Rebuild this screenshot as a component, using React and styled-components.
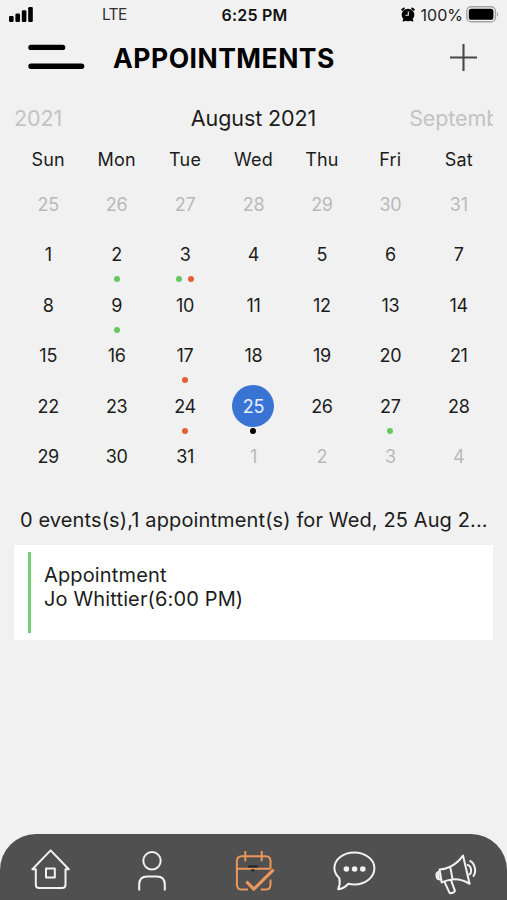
import React, { useState } from 'react'
import styled, { createGlobalStyle } from 'styled-components'

const weekDays = ['Sun', 'Mon', 'Tue', 'Wed', 'Thu', 'Fri', 'Sat']

const GREEN = '#67c763'
const RED = '#e65f33'

const marks = {
  2: [GREEN],
  3: [GREEN, RED],
  9: [GREEN],
  17: [RED],
  24: [RED],
  25: ['#000'],
  27: [GREEN],
}

// six weeks, starting on Sunday 25 July
const days = Array.from({ length: 42 }, (_, i) => {
  if (i < 7) return { day: 25 + i, muted: true }
  if (i < 38) return { day: i - 6, muted: false }
  return { day: i - 37, muted: true }
})

const SignalIcon = () => (
  <svg width="24" height="15" viewBox="0 0 24 15">
    <rect x="0" y="9" width="4.6" height="6" rx="1.2" />
    <rect x="6.4" y="6.5" width="4.6" height="8.5" rx="1.2" />
    <rect x="12.8" y="3.2" width="4.6" height="11.8" rx="1.2" />
    <rect x="19.2" y="0" width="4.6" height="15" rx="1.2" />
  </svg>
)

const AlarmIcon = () => (
  <svg width="14" height="15" viewBox="0 0 14 15">
    <circle cx="7" cy="8" r="6.3" />
    <path d="M1.3 2.8 2.8 1.5M12.7 2.8 11.2 1.5M2.6 13.6l1-1M11.4 13.6l-1-1" stroke="#000" strokeWidth="2" strokeLinecap="round" />
    <path d="M7.3 4.6V8.3H4.5" fill="none" stroke="#f2f2f2" strokeWidth="1.1" />
  </svg>
)

const BatteryIcon = () => (
  <svg width="34" height="17" viewBox="0 0 34 17">
    <rect x="0.8" y="0.8" width="28.6" height="15" rx="4.4" fill="none" stroke="#a5a5a5" strokeWidth="1.4" />
    <rect x="2.8" y="2.8" width="24.6" height="11" rx="2.6" />
    <path d="M31 6.2c1.6.6 1.6 3.8 0 4.4z" fill="#a5a5a5" />
  </svg>
)

const MenuIcon = () => (
  <svg width="57" height="26" viewBox="0 0 57 26" stroke="#000" strokeWidth="5.4" strokeLinecap="round">
    <path d="M3 3.4H34.6M3 22.2H53.6" />
  </svg>
)

const PlusIcon = () => (
  <svg width="27" height="27" viewBox="0 0 27 27" stroke="#484848" strokeWidth="2.1">
    <path d="M13.5 0V27M0 13.5H27" />
  </svg>
)

const HomeIcon = () => (
  <svg width="40" height="42" viewBox="0 0 40 42">
    <path d="M4.8 20.2v15.3q0 3.5 3.5 3.5h22.7q3.5 0 3.5-3.5V20.2h3.3L19.6 1.4 1.4 20.2z" />
    <rect x="15" y="19.6" width="8.8" height="8.8" />
  </svg>
)

const UserIcon = () => (
  <svg width="28" height="40" viewBox="0 0 28 40">
    <circle cx="14" cy="9.8" r="8.7" />
    <path d="M1.2 39.5V33.6Q1.2 25.6 9.2 25.6H18.8Q26.8 25.6 26.8 33.6V39.5" />
  </svg>
)

const CalendarIcon = () => (
  <svg width="40" height="42" viewBox="-2 0 40 42" overflow="visible">
    <path d="M13 38.6H7.2Q1.9 38.6 1.9 33.4V10.2Q1.9 5.2 6.9 5.2H30.5Q35.5 5.2 35.5 10.2V17.8M1.9 17.8H35.5M35.5 28.6V33.4Q35.5 38.6 30.3 38.6H25.8" />
    <path d="M10.3 0V10.2M26.7 0V10.2" />
    <path className="tick" d="M11.4 30.6 18.8 38.2 38.6 18.6" />
    <path className="mark" d="M13.2 15.4H22.8M16.3 19.2H19.3" />
  </svg>
)

const ChatIcon = () => (
  <svg width="43" height="41" viewBox="0 0 43 41">
    <path d="M6.3 27.2C3.1 24 1.4 20.9 1.4 17.3 1.4 8.4 10.2 1.5 21.2 1.5S41.4 8.4 41.4 17.3 32.4 33.4 21.4 33.4Q18.2 33.4 15.4 32.8C12.4 36 9.2 38.2 5.2 38.2Q7.6 32.5 6.3 27.2Z" />
    <g className="dots">
      <circle cx="13.4" cy="18" r="2.8" />
      <circle cx="21.6" cy="18" r="2.8" />
      <circle cx="29.8" cy="18" r="2.8" />
    </g>
  </svg>
)

const MegaphoneIcon = () => (
  <svg width="41" height="41" viewBox="1 0 41 41" overflow="visible">
    <path d="M4.6 15.6Q11 15 15.2 12.6L17.6 25.4Q12.6 25.6 6.7 28.4ZM15.2 12.6Q22.4 9.4 28 1.6L34.6 29.8Q26 24.6 17.6 25.4" />
    <path d="M4.7 17.4Q.8 18.4 1.5 22 2 25.8 6.2 25.4M3.6 19v5" />
    <path d="M9.6 28.2 14.2 38.2Q15 39.8 16.8 39L18.8 38.2Q20.4 37.4 19.6 35.8L16 26.2" />
    <path d="M31.8 10.7Q35 10.8 36 15.2 36.8 19.4 33.6 20.8M34.5 6.6Q39 8.6 40 14.4 40.8 19.6 38 22.6" />
  </svg>
)

const tabs = [
  { name: 'home', Icon: HomeIcon, shift: '15px' },
  { name: 'profile', Icon: UserIcon, shift: '17px' },
  { name: 'calendar', Icon: CalendarIcon, shift: '17px' },
  { name: 'messages', Icon: ChatIcon, shift: '17px' },
  { name: 'news', Icon: MegaphoneIcon, shift: '20px' },
]

const App = () => {
  const [selected, setSelected] = useState(25)

  return (
    <>
      <GlobalStyle />
      <Screen>
        <StatusBar>
          <StatusLeft>
            <SignalIcon />
            <Carrier>LTE</Carrier>
          </StatusLeft>
          <Clock>6:25 PM</Clock>
          <StatusRight>
            <AlarmIcon />
            <span>100%</span>
            <BatteryIcon />
          </StatusRight>
        </StatusBar>

        <Header>
          <MenuIcon />
          <Title>APPOINTMENTS</Title>
          <PlusIcon />
        </Header>

        <Months>
          <Month $muted>2021</Month>
          <Month>August 2021</Month>
          <Month $muted $next>Septemb</Month>
        </Months>

        <WeekRow>
          {weekDays.map((name) => <span key={name}>{name}</span>)}
        </WeekRow>

        <DayGrid>
          {days.map(({ day, muted }, i) => (
            <DayCell key={i} onClick={() => !muted && setSelected(day)}>
              <DayNumber $muted={muted} $selected={!muted && day === selected}>{day}</DayNumber>
              <Dots>
                {!muted && (marks[day] || []).map((color) => <Dot key={color} $color={color} />)}
              </Dots>
            </DayCell>
          ))}
        </DayGrid>

        <Summary>0 events(s),1 appointment(s) for Wed, 25 Aug 2...</Summary>

        <Card>
          <CardLine />
          <CardText>
            <p>Appointment</p>
            <p>Jo Whittier(6:00 PM)</p>
          </CardText>
        </Card>

        <TabBar>
          {tabs.map(({ name, Icon, shift }) => (
            <Tab key={name} aria-label={name} $active={name === 'calendar'} $shift={shift}>
              <Icon />
            </Tab>
          ))}
        </TabBar>
      </Screen>
    </>
  )
}

const GlobalStyle = createGlobalStyle`
  * {
    box-sizing: border-box;
  }
  body {
    margin: 0;
    background: #f1f1f1;
  }
  p, h1 {
    margin: 0;
  }
  svg {
    display: block;
    flex-shrink: 0;
  }
`;

const Screen = styled.div`
  display: flex;
  flex-direction: column;
  width: 507px;
  height: 900px;
  overflow: hidden;
  background: #f1f1f1;
  color: #1c1c1c;
  font-family: Inter, "Liberation Sans", sans-serif;
`;

const StatusBar = styled.div`
  display: grid;
  grid-template-columns: 1fr auto 1fr;
  align-items: center;
  height: 29px;
  padding: 0 7px 0 9px;
  font-size: 16px;
`;

const StatusLeft = styled.div`
  display: flex;
  align-items: center;
  gap: 69px;
  padding-bottom: 1px;
`;

const Carrier = styled.span`
  font-size: 15.5px;
  letter-spacing: -0.7px;
  color: #333;
`;

const Clock = styled.span`
  font-weight: 600;
  font-size: 16px;
  letter-spacing: 0.2px;
  color: #111;
`;

const StatusRight = styled.div`
  display: flex;
  align-items: center;
  justify-content: flex-end;
  span {
    margin: 0 3px 0 6px;
  }
`;

const Header = styled.header`
  display: flex;
  align-items: center;
  height: 56px;
  padding: 0 30px 0 28px;
`;

const Title = styled.h1`
  flex: 1;
  margin-left: 28px;
  padding-top: 1px;
  font-size: 26.5px;
  line-height: 32px;
  font-weight: 700;
  letter-spacing: 0.5px;
  color: #000;
`;

const Months = styled.div`
  display: grid;
  grid-template-columns: minmax(0, 1fr) auto minmax(0, 1fr);
  align-items: center;
  height: 66px;
  margin: 0 14px;
  overflow: hidden;
`;

const Month = styled.span`
  margin-left: ${({ $next }) => ($next ? '93px' : '0')};
  font-size: 21.5px;
  letter-spacing: -0.1px;
  white-space: nowrap;
  color: ${({ $muted }) => ($muted ? '#c3c3c3' : '#1c1c1c')};
`;

const WeekRow = styled.div`
  display: grid;
  grid-template-columns: repeat(7, 1fr);
  height: 18px;
  margin: 0 14px;
  line-height: 18px;
  font-size: 18px;
  letter-spacing: 0.2px;
  text-align: center;
`;

const DayGrid = styled.div`
  display: grid;
  grid-template-columns: repeat(7, 1fr);
  grid-auto-rows: 50.4px;
  margin: 14px 14px 0;
`;

const DayCell = styled.div`
  display: flex;
  flex-direction: column;
  align-items: center;
`;

const DayNumber = styled.span`
  width: 42px;
  height: 42px;
  border-radius: 50%;
  line-height: 43.4px;
  font-size: 18px;
  letter-spacing: -0.3px;
  text-align: center;
  background: ${({ $selected }) => ($selected ? '#3973d3' : 'transparent')};
  color: ${({ $muted, $selected }) => ($selected ? '#e8f0ff' : $muted ? '#b9b9b9' : '#1c1c1c')};
`;

const Dots = styled.div`
  display: flex;
  gap: 6px;
  margin-top: 1px;
`;

const Dot = styled.i`
  width: 6px;
  height: 6px;
  border-radius: 50%;
  background: ${({ $color }) => $color};
`;

const Summary = styled.p`
  margin: 20px 0 0 20px;
  line-height: 30px;
  font-size: 20px;
  letter-spacing: 0.12px;
  white-space: nowrap;
`;

const Card = styled.div`
  display: flex;
  height: 95px;
  margin: 10px 14px 0;
  padding: 7px 14px;
  background: #fff;
`;

const CardLine = styled.div`
  width: 3px;
  background: #74cd70;
`;

const CardText = styled.div`
  padding: 12px 0 0 13px;
  font-size: 20px;
  line-height: 23.5px;
  letter-spacing: 0.14px;
`;

const TabBar = styled.nav`
  display: grid;
  grid-template-columns: repeat(5, 1fr);
  height: 66px;
  margin-top: auto;
  border-radius: 36px 36px 0 0;
  background: #505050;
`;

const Tab = styled.button`
  display: flex;
  justify-content: center;
  align-items: flex-start;
  padding: ${({ $shift }) => $shift} 0 0;
  border: 0;
  background: none;
  svg {
    fill: none;
    stroke: ${({ $active }) => ($active ? '#e9975a' : '#f2f2f2')};
    stroke-width: 2;
    stroke-linejoin: round;
  }
  .dots {
    fill: #f2f2f2;
    stroke: none;
  }
  .tick {
    stroke-width: 3.2;
  }
  .mark {
    stroke: #222;
  }
`;

export default App
